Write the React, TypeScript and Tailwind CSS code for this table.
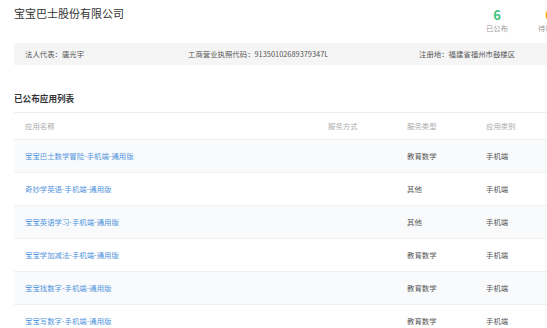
import React from 'react';

interface AppRow {
  name: string;
  mode: string;
  type: string;
  category: string;
}

const rows: AppRow[] = [
  { name: '宝宝巴士数学冒险-手机端-通用版', mode: '', type: '教育数学', category: '手机端' },
  { name: '奇妙学英语-手机端-通用版', mode: '', type: '其他', category: '手机端' },
  { name: '宝宝英语学习-手机端-通用版', mode: '', type: '其他', category: '手机端' },
  { name: '宝宝学加减法-手机端-通用版', mode: '', type: '教育数学', category: '手机端' },
  { name: '宝宝找数字-手机端-通用版', mode: '', type: '教育数学', category: '手机端' },
  { name: '宝宝写数字-手机端-通用版', mode: '', type: '教育数学', category: '手机端' },
];

const App: React.FC = () => {
  return (
    <div
      className="w-[547px] h-[328px] overflow-hidden bg-white"
      style={{ fontFamily: '"Noto Sans CJK SC", "Noto Sans", sans-serif' }}
    >
      <div className="w-[640px]">
        <div className="flex items-start h-[43px]">
          <h1 className="w-[471px] pl-[14px] pt-[5px] text-[11px] leading-[16px] text-[#333]">
            宝宝巴士股份有限公司
          </h1>
          <div className="flex pt-[7px]">
            <div className="w-[52px] flex flex-col items-center">
              <span className="text-[13px] leading-[16px] font-semibold text-[#3cc47c]">6</span>
              <span className="text-[7.3px] leading-[10px] text-[#999]">已公布</span>
            </div>
            <div className="w-[52px] flex flex-col items-center">
              <span className="text-[13px] leading-[16px] font-semibold text-[#fbab1a]">0</span>
              <span className="text-[7.3px] leading-[10px] text-[#999]">待审核</span>
            </div>
          </div>
        </div>

        <div className="ml-[14px] h-[22px] bg-[#f5f5f5] flex items-center pl-[11px] text-[7.4px] text-[#555]">
          <span className="w-[163px]">法人代表：唐光宇</span>
          <span className="w-[231px]">工商营业执照代码：91350102689379347L</span>
          <span>注册地：福建省福州市鼓楼区</span>
        </div>

        <h2 className="pl-[14px] pt-[26px] h-[47px] text-[8.6px] leading-[14px] font-bold text-[#333]">
          已公布应用列表
        </h2>

        <div className="ml-[14px] border-t border-[#eeeeee]">
          <div className="grid grid-cols-[314px_79px_79px_1fr] h-[27px] items-center text-[7.4px] text-[#aaa] border-b border-[#eeeeee]">
            <span className="pl-[11px]">应用名称</span>
            <span>服务方式</span>
            <span>服务类型</span>
            <span>应用类别</span>
          </div>
          {rows.map((row, i) => (
            <div
              key={i}
              className={`grid grid-cols-[314px_79px_79px_1fr] h-[33px] items-center text-[7.4px] border-b border-[#f0f0f0] ${
                i % 2 === 0 ? 'bg-[#f9fafc]' : 'bg-white'
              }`}
            >
              <span className="pl-[11px] text-[#4f94dc]">{row.name}</span>
              <span className="text-[#555]">{row.mode}</span>
              <span className="text-[#555]">{row.type}</span>
              <span className="text-[#555]">{row.category}</span>
            </div>
          ))}
        </div>
      </div>
    </div>
  );
};

export default App;
